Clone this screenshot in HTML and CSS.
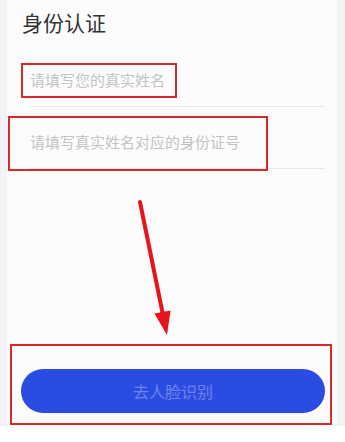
FILE: index.html
```html
<!DOCTYPE html>
<html lang="zh-CN">
<head>
<meta charset="utf-8">
<title>身份认证</title>
<link rel="stylesheet" href="styles.css">
</head>
<body>
<div class="screen">
  <div class="panel">
    <h1 class="title">身份认证</h1>
    <div class="field field-name"><span class="placeholder">请填写您的真实姓名</span></div>
    <div class="field field-id"><span class="placeholder">请填写真实姓名对应的身份证号</span></div>
    <div class="spacer"></div>
    <button class="btn" type="button">去人脸识别</button>
  </div>
  <div class="mark mark-name"></div>
  <div class="mark mark-id"></div>
  <div class="mark mark-btn"></div>
  <svg class="arrow" width="345" height="442" viewBox="0 0 345 442">
    <line x1="140" y1="202" x2="163" y2="315" stroke="#e8141a" stroke-width="4" stroke-linecap="round"/>
    <polygon points="167,335 154.4,313.6 170.6,310.4" fill="#e8141a"/>
  </svg>
</div>
</body>
</html>
```

FILE: styles.css
```css
* { box-sizing: border-box; }
html, body {
  margin: 0;
  padding: 0;
  background: #ffffff;
  font-family: "Noto Sans CJK SC", "Noto Sans", sans-serif;
}
.screen {
  position: relative;
  width: 345px;
  height: 442px;
  background: #ffffff;
}
.panel {
  margin-left: 7px;
  width: 330px;
  height: 426px;
  background: #fcfcfd;
  display: flex;
  flex-direction: column;
  padding: 0 12px 0 23px;
  box-shadow: -7px 0 0 #f2f2f4, 8px 0 0 #f2f2f4;
}
.title {
  margin: 0 0 0 -8px;
  padding-top: 10px;
  font-size: 21px;
  line-height: 24px;
  font-weight: 400;
  color: #333333;
}
.field {
  border-bottom: 1px solid #e7e7ea;
}
.field-name { padding: 36px 0 16px; }
.field-id { padding: 25px 0 16px; }
.placeholder {
  display: block;
  font-size: 15px;
  line-height: 20px;
  color: #c3c3c6;
}
.spacer { flex: 1; }
.btn {
  margin: 0 0 13px -9px;
  height: 44px;
  border: none;
  border-radius: 22px;
  background: #2a4ce2;
  color: #6f84ea;
  font-family: inherit;
  font-size: 16px;
  line-height: 20px;
  padding: 0;
}
.mark {
  position: absolute;
  border: 2px solid #d8282a;
}
.mark-name { left: 21px; top: 63px; width: 156px; height: 35px; }
.mark-id { left: 8px; top: 116px; width: 260px; height: 55px; }
.mark-btn { left: 10px; top: 344px; width: 322px; height: 81px; }
.arrow {
  position: absolute;
  left: 0;
  top: 0;
}
```
